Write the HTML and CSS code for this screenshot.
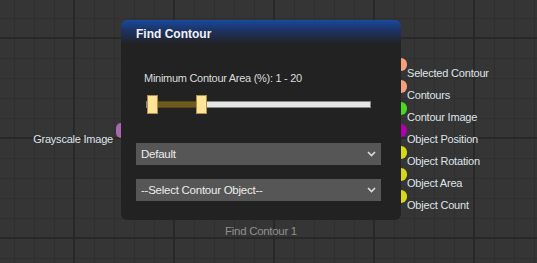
FILE: index.html
```html
<!DOCTYPE html>
<html lang="en">
<head>
  <meta charset="UTF-8">
  <meta name="viewport" content="width=device-width, initial-scale=1.0">
  <link rel="stylesheet" href="styles.css">
  <title>Find Contour</title>
</head>
<body>
  <div class="canvas">
    <div class="node">
      <div class="node-title">Find Contour</div>
      <div class="node-body">
        <div class="range-label">Minimum Contour Area (%): 1 - 20</div>
        <div class="slider">
          <div class="track"></div>
          <div class="fill"></div>
          <div class="handle handle-min"></div>
          <div class="handle handle-max"></div>
        </div>
        <div class="dropdown">
          <span>Default</span>
          <svg width="9" height="6" viewBox="0 0 9 6"><path d="M1 1 L4.5 4.5 L8 1" fill="none" stroke="#ddd" stroke-width="1.6"/></svg>
        </div>
        <div class="dropdown">
          <span>--Select Contour Object--</span>
          <svg width="9" height="6" viewBox="0 0 9 6"><path d="M1 1 L4.5 4.5 L8 1" fill="none" stroke="#ddd" stroke-width="1.6"/></svg>
        </div>
      </div>

      <div class="input">
        <span class="input-label">Grayscale Image</span>
        <span class="port port-in"></span>
      </div>

      <ul class="outputs">
        <li><span class="port salmon"></span><span class="out-label">Selected Contour</span></li>
        <li><span class="port salmon"></span><span class="out-label">Contours</span></li>
        <li><span class="port green"></span><span class="out-label">Contour Image</span></li>
        <li><span class="port magenta"></span><span class="out-label">Object Position</span></li>
        <li><span class="port yellow"></span><span class="out-label">Object Rotation</span></li>
        <li><span class="port yellow"></span><span class="out-label">Object Area</span></li>
        <li><span class="port yellow"></span><span class="out-label">Object Count</span></li>
      </ul>

      <div class="node-caption">Find Contour 1</div>
    </div>
  </div>
</body>
</html>
```

FILE: styles.css
```css
body {
  margin: 0;
  font-family: 'Liberation Sans', Arial, sans-serif;
}

.canvas {
  position: relative;
  width: 537px;
  height: 263px;
  overflow: hidden;
  background-color: #353535;
  background-image:
    linear-gradient(90deg, #282828 2px, transparent 2px),
    linear-gradient(#282828 2px, transparent 2px),
    linear-gradient(90deg, #2f2f2f 1px, transparent 1px),
    linear-gradient(#2f2f2f 1px, transparent 1px);
  background-size: 100px 100%, 100% 100px, 20px 100%, 100% 20px;
  background-position: 73px 0, 0 37px, 14px 0, 0 18px;
}

/* node sits on the free canvas */
.node {
  position: absolute;
  left: 121px;
  top: 20px;
  width: 280px;
  height: 200px;
  border-radius: 6px;
  background: linear-gradient(#174a9e 0, #1d3366 10px, #222 24px);
}

.node-title {
  padding: 7px 0 0 15px;
  height: 19px;
  font-size: 12px;
  font-weight: bold;
  color: #eef2f8;
}

.node-body {
  display: flex;
  flex-direction: column;
  padding: 26px 20px 0 15px;
}

.range-label {
  margin-left: 8px;
  font-size: 11px;
  line-height: 13px;
  letter-spacing: -0.28px;
  color: #dcdcdc;
}

.slider {
  position: relative;
  height: 19px;
  margin: 10px 0 0 10px;
  width: 225px;
}

.track {
  position: absolute;
  left: 0;
  right: 0;
  top: 6px;
  height: 7px;
  background: #e6e6e6;
  border: 1px solid #888;
  box-sizing: border-box;
}

.fill {
  position: absolute;
  left: 4px;
  width: 54px;
  top: 6px;
  height: 7px;
  background: #6e5b1e;
  border-top: 1px solid #544616;
  border-bottom: 1px solid #544616;
  box-sizing: border-box;
}

.handle {
  position: absolute;
  top: 0;
  width: 11px;
  height: 19px;
  background: #ffe396;
  border: 1px solid #a89050;
  box-sizing: border-box;
}

.handle-min { left: 1px; }
.handle-max { left: 50px; }

.dropdown {
  display: flex;
  align-items: center;
  justify-content: space-between;
  height: 22px;
  padding: 0 5px 0 5px;
  margin-top: 29px;
  background: #565656;
  font-size: 11.5px;
  letter-spacing: -0.25px;
  color: #ececec;
}

.dropdown + .dropdown {
  margin-top: 14px;
}

.port {
  display: block;
  width: 6px;
  height: 13px;
  border-radius: 0 7px 7px 0;
}

.input {
  position: absolute;
  right: 100%;
  top: 103px;
  width: 100px;
}

.port-in {
  position: absolute;
  right: 0;
  top: 0;
  width: 5px;
  height: 15px;
  border-radius: 7px 0 0 7px;
  background: #a868b0;
}

.input-label {
  position: absolute;
  right: 8px;
  top: 10px;
  white-space: nowrap;
  font-size: 11px;
  line-height: 13px;
  letter-spacing: -0.22px;
  color: #dfe4ea;
}

.outputs {
  position: absolute;
  left: 100%;
  top: 38px;
  margin: 0;
  padding: 0;
  list-style: none;
}

.outputs li {
  display: flex;
  align-items: flex-start;
  height: 22px;
}

.out-label {
  margin-top: 9px;
  font-size: 11px;
  line-height: 13px;
  letter-spacing: -0.2px;
  color: #dfe4ea;
  white-space: nowrap;
}

.salmon { background: #f5a07c; }
.green { background: #4ad820; }
.magenta { background: #b000a8; }
.yellow { background: #d8d814; }

.node-caption {
  position: absolute;
  top: 100%;
  left: 0;
  right: 0;
  margin-top: 5px;
  text-align: center;
  font-size: 11.5px;
  letter-spacing: -0.3px;
  color: #909090;
}
```
